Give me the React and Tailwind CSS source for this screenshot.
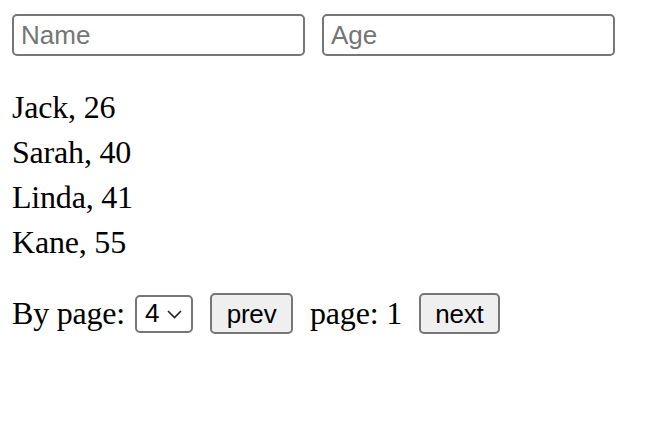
import React from "react";

const people = [
  ["Jack", 26],
  ["Sarah", 40],
  ["Linda", 41],
  ["Kane", 55],
];

const field =
  "w-[293px] h-[42px] border-2 border-[#767676] rounded-[5px] pl-[7px] text-[26px] font-['Liberation_Sans',sans-serif] placeholder:text-[#757575] outline-none";
const btn =
  "h-[41px] bg-[#efefef] border-2 border-[#767676] rounded-[5px] text-[26px] font-['Liberation_Sans',sans-serif] flex items-center justify-center pt-[2px]";

export default function App() {
  return (
    <div className="w-[656px] h-[432px] bg-white px-[12px] pt-[14px] text-black font-['Liberation_Serif',serif]">
      <div className="flex gap-[17px]">
        <input placeholder="Name" className={field} />
        <input placeholder="Age" className={field} />
      </div>
      <div className="mt-[29px] flex flex-col text-[32px] leading-[45px] tracking-[-0.2px]">
        {people.map(([n, a]) => (
          <div key={n}>
            {n}, {a}
          </div>
        ))}
      </div>
      <div className="mt-[28px] flex items-center text-[32px] leading-[41px] tracking-[-0.2px]">
        <span>By page:</span>
        <div className="ml-[10px] w-[58px] h-[38px] border-2 border-[#767676] rounded-[5px] flex items-center pl-[8px] text-[26px] font-['Liberation_Sans',sans-serif]">
          <span>4</span>
          <svg className="ml-[8px]" width="15" height="10" viewBox="0 0 15 10" fill="none" stroke="#222" strokeWidth="1.6">
            <path d="M1 2 L7.5 8.5 L14 2" />
          </svg>
        </div>
        <button className={`ml-[17px] w-[83px] ${btn}`}>prev</button>
        <span className="ml-[17px]">page: 1</span>
        <button className={`ml-[17px] w-[81px] ${btn}`}>next</button>
      </div>
    </div>
  );
}
